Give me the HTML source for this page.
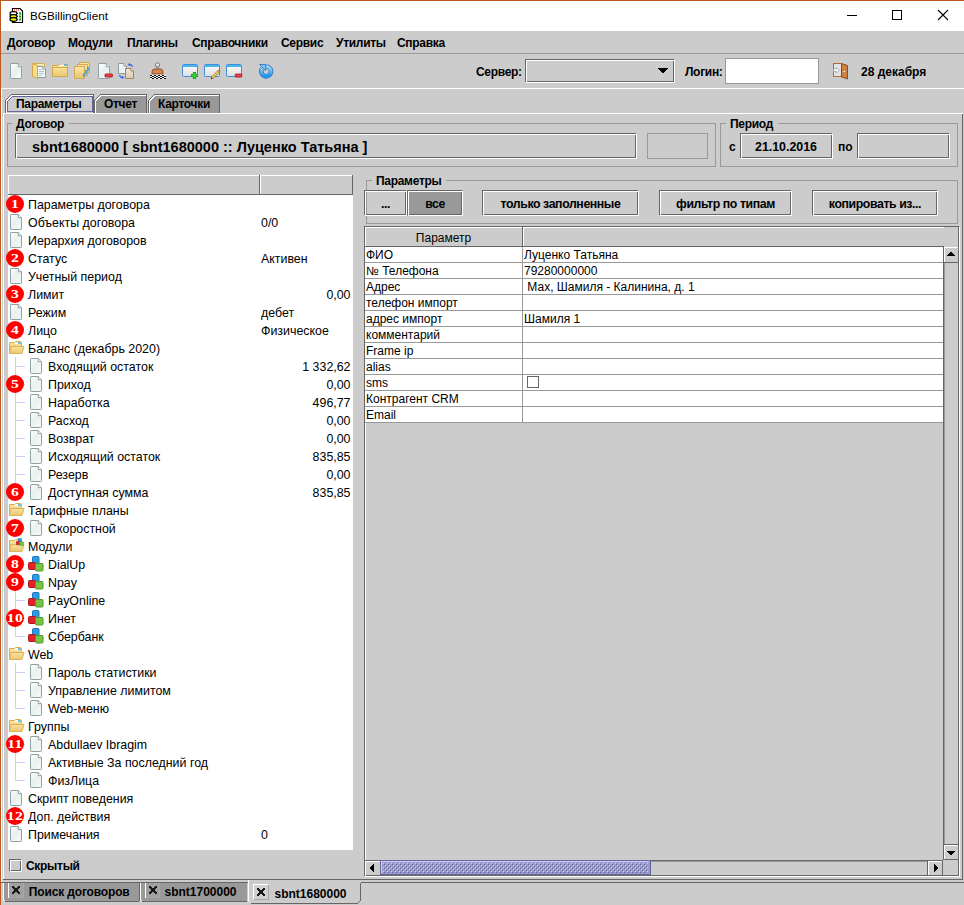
<!DOCTYPE html><html><head><meta charset="utf-8"><style>
html,body{margin:0;padding:0}
body{width:964px;height:905px;position:relative;overflow:hidden;background:#cccccc;font-family:"Liberation Sans",sans-serif}
div,span,svg{position:absolute;box-sizing:border-box}
.t{white-space:pre;display:block}
</style></head><body>
<div style="left:0px;top:0px;width:964px;height:31px;background:#fff"></div>
<div style="left:0px;top:0px;width:964px;height:1px;background:#bc581e"></div>
<div style="left:0px;top:0px;width:1px;height:905px;background:#bc581e"></div>
<span class="t" style="left:30px;top:10.10px;font-size:11.7px;line-height:11.7px;height:15.7px;font-weight:normal;color:#000;">BGBillingClient</span>
<div style="left:847px;top:15px;width:10px;height:1px;background:#000"></div>
<div style="left:892px;top:10px;width:10px;height:10px;border:1px solid #000"></div>
<svg style="left:937px;top:9px" width="12" height="12" viewBox="0 0 12 12"><path d="M1 1L11 11M11 1L1 11" stroke="#000" stroke-width="1.1"/></svg>
<div style="left:1px;top:53px;width:963px;height:1px;background:#999999"></div>
<span class="t" style="left:7px;top:36.84px;font-size:12px;line-height:12px;height:16px;font-weight:bold;color:#000;letter-spacing:-0.3px">Договор</span>
<span class="t" style="left:68px;top:36.84px;font-size:12px;line-height:12px;height:16px;font-weight:bold;color:#000;letter-spacing:-0.3px">Модули</span>
<span class="t" style="left:127px;top:36.84px;font-size:12px;line-height:12px;height:16px;font-weight:bold;color:#000;letter-spacing:-0.3px">Плагины</span>
<span class="t" style="left:192px;top:36.84px;font-size:12px;line-height:12px;height:16px;font-weight:bold;color:#000;letter-spacing:-0.3px">Справочники</span>
<span class="t" style="left:281px;top:36.84px;font-size:12px;line-height:12px;height:16px;font-weight:bold;color:#000;letter-spacing:-0.3px">Сервис</span>
<span class="t" style="left:336px;top:36.84px;font-size:12px;line-height:12px;height:16px;font-weight:bold;color:#000;letter-spacing:-0.3px">Утилиты</span>
<span class="t" style="left:397px;top:36.84px;font-size:12px;line-height:12px;height:16px;font-weight:bold;color:#000;letter-spacing:-0.3px">Справка</span>
<div style="left:1px;top:88px;width:963px;height:1px;background:#fff"></div>
<span class="t" style="left:476px;top:65.84px;font-size:12px;line-height:12px;height:16px;font-weight:bold;color:#000;letter-spacing:-0.3px">Сервер:</span>
<div style="left:525px;top:59px;width:149px;height:23px;border:1px solid #666666"></div>
<div style="left:526px;top:60px;width:149px;height:23px;border:1px solid #fff"></div>
<svg shape-rendering="crispEdges" style="left:658px;top:68px" width="10" height="5"><path d="M0 0h10v1h-10zM1 1h8v1h-8zM2 2h6v1h-6zM3 3h4v1h-4zM4 4h2v1h-2z" fill="#000"/></svg>
<span class="t" style="left:685px;top:65.84px;font-size:12px;line-height:12px;height:16px;font-weight:bold;color:#000;letter-spacing:-0.3px">Логин:</span>
<div style="left:725px;top:58px;width:94px;height:26px;background:#fff;border:1px solid #999999"></div>
<span class="t" style="left:861px;top:65.84px;font-size:12px;line-height:12px;height:16px;font-weight:bold;color:#000;">28 декабря</span>
<div style="left:3px;top:113px;width:960px;height:1px;background:#fff"></div>
<div style="left:3px;top:113px;width:1px;height:767px;background:#fff"></div>
<div style="left:3px;top:879px;width:960px;height:1px;background:#666666"></div>
<div style="left:962px;top:113px;width:1px;height:767px;background:#666666"></div>
<svg shape-rendering="crispEdges" style="left:5px;top:94px" width="89" height="20"><path d="M0.5 19V6.5L6.5 0.5H88.5V19" fill="#cccccc" stroke="#666666"/><path d="M1.5 20V7L7 1.5H88" fill="none" stroke="#fff"/><path d="M2.5 17.5V7.5L7.5 2.5H87.5V17.5H2.5Z" fill="none" stroke="#666699"/></svg>
<span class="t" style="left:16px;top:97.84px;font-size:12px;line-height:12px;height:16px;font-weight:bold;color:#000;letter-spacing:-0.3px">Параметры</span>
<svg shape-rendering="crispEdges" style="left:94px;top:94px" width="54" height="19"><path d="M0.5 19V6.5L6.5 0.5H52.5V19" fill="#999999" stroke="#666666" stroke-width="1"/><path d="M1.5 19V7L7 1.5H52" fill="none" stroke="#fff" stroke-width="1"/></svg>
<span class="t" style="left:104px;top:97.84px;font-size:12px;line-height:12px;height:16px;font-weight:bold;color:#000;letter-spacing:-0.3px">Отчет</span>
<svg shape-rendering="crispEdges" style="left:148px;top:94px" width="73" height="19"><path d="M0.5 19V6.5L6.5 0.5H71.5V19" fill="#999999" stroke="#666666" stroke-width="1"/><path d="M1.5 19V7L7 1.5H71" fill="none" stroke="#fff" stroke-width="1"/></svg>
<span class="t" style="left:158px;top:97.84px;font-size:12px;line-height:12px;height:16px;font-weight:bold;color:#000;letter-spacing:-0.3px">Карточки</span>
<div style="left:94px;top:113px;width:869px;height:1px;background:#fff"></div>
<div style="left:7px;top:123px;width:1px;height:44px;background:#999999"></div>
<div style="left:715px;top:123px;width:1px;height:44px;background:#999999"></div>
<div style="left:7px;top:166px;width:709px;height:1px;background:#999999"></div>
<div style="left:7px;top:123px;width:5px;height:1px;background:#999999"></div>
<div style="left:69px;top:123px;width:647px;height:1px;background:#999999"></div>
<span class="t" style="left:16px;top:117.84px;font-size:12px;line-height:12px;height:16px;font-weight:bold;color:#000;letter-spacing:-0.3px">Договор</span>
<div style="left:15px;top:133px;width:621px;height:25px;border:1px solid #666666"></div>
<div style="left:16px;top:134px;width:621px;height:25px;border:1px solid #fff"></div>
<span class="t" style="left:32px;top:139.73px;font-size:14.5px;line-height:14.5px;height:18.5px;font-weight:bold;color:#000;">sbnt1680000 [ sbnt1680000 :: Луценко Татьяна ]</span>
<div style="left:647px;top:133px;width:61px;height:26px;border:1px solid #999999"></div>
<div style="left:720px;top:123px;width:1px;height:44px;background:#999999"></div>
<div style="left:957px;top:123px;width:1px;height:44px;background:#999999"></div>
<div style="left:720px;top:166px;width:238px;height:1px;background:#999999"></div>
<div style="left:720px;top:123px;width:6px;height:1px;background:#999999"></div>
<div style="left:778px;top:123px;width:180px;height:1px;background:#999999"></div>
<span class="t" style="left:730px;top:117.84px;font-size:12px;line-height:12px;height:16px;font-weight:bold;color:#000;letter-spacing:-0.3px">Период</span>
<span class="t" style="left:729px;top:140.84px;font-size:12px;line-height:12px;height:16px;font-weight:bold;color:#000;">с</span>
<div style="left:740px;top:133px;width:92px;height:25px;border:1px solid #666666"></div>
<div style="left:741px;top:134px;width:92px;height:25px;border:1px solid #fff"></div>
<span class="t" style="left:636.0px;top:140.50px;width:300px;text-align:center;font-size:12.4px;line-height:12.4px;font-weight:bold;color:#000;letter-spacing:0px">21.10.2016</span>
<span class="t" style="left:838px;top:140.84px;font-size:12px;line-height:12px;height:16px;font-weight:bold;color:#000;">по</span>
<div style="left:857px;top:133px;width:92px;height:25px;border:1px solid #666666"></div>
<div style="left:858px;top:134px;width:92px;height:25px;border:1px solid #fff"></div>
<svg width="0" height="0" style="left:0;top:0"><defs>
<linearGradient id="gdoc" x1="0" y1="0" x2="1" y2="1"><stop offset="0" stop-color="#ffffff"/><stop offset="0.45" stop-color="#e8f0f0"/><stop offset="1" stop-color="#f6fbfb"/></linearGradient>
<linearGradient id="gfold" x1="0" y1="0" x2="0" y2="1"><stop offset="0" stop-color="#fbe9a6"/><stop offset="1" stop-color="#e7c270"/></linearGradient>
<linearGradient id="gfold2" x1="0" y1="0" x2="0" y2="1"><stop offset="0" stop-color="#f9e39a"/><stop offset="1" stop-color="#e9c672"/></linearGradient>
<symbol id="doc" viewBox="0 0 12 16"><path d="M1 0.5H8.3L11.5 3.7V14.8Q11.5 15.5 10.8 15.5H1.2Q0.5 15.5 0.5 14.8V1.2Q0.5 0.5 1.2 0.5Z" fill="url(#gdoc)" stroke="#8fa1a1" stroke-width="1"/><path d="M8.3 0.5V3.7H11.5" fill="#fff" stroke="#8fa1a1" stroke-width="1"/></symbol>
<symbol id="folder" viewBox="0 0 16 14"><path d="M0.5 1.5H5.5L6.5 0.5H11.5L12.5 1.5V12.5H0.5Z" fill="url(#gfold)" stroke="#d9ae55" stroke-width="1"/><path d="M6 1.5H11.5V3H6Z" fill="#fff"/><path d="M9 1.3H11.8V2.8H9Z" fill="#3aa8e8"/><path d="M2 5.5H15L13 12.5H0.5Z" fill="url(#gfold2)" stroke="#dcb25c" stroke-width="1"/></symbol>
<symbol id="mod" viewBox="0 0 16 16"><rect x="4.5" y="0.5" width="6.5" height="7" rx="1" fill="#2c9be0" stroke="#1a78c0"/><rect x="0.5" y="6.5" width="7" height="7" rx="1" fill="#e0222a" stroke="#b0151c"/><rect x="7.5" y="7.5" width="7.5" height="7.5" rx="1" fill="#76c441" stroke="#4f9a2a"/></symbol>
</defs></svg>
<div style="left:8px;top:175px;width:345px;height:675px;background:#fff"></div>
<div style="left:8px;top:175px;width:345px;height:20px;background:#cccccc"></div>
<div style="left:8px;top:175px;width:345px;height:1px;background:#fff"></div>
<div style="left:8px;top:175px;width:1px;height:20px;background:#fff"></div>
<div style="left:8px;top:194px;width:345px;height:1px;background:#666666"></div>
<div style="left:259px;top:175px;width:1px;height:20px;background:#666666"></div>
<div style="left:260px;top:176px;width:1px;height:18px;background:#fff"></div>
<div style="left:352px;top:175px;width:1px;height:20px;background:#666666"></div>
<div style="left:15px;top:357px;width:1px;height:136px;background:#ccccff"></div>
<div style="left:15px;top:366px;width:10px;height:1px;background:#ccccff"></div>
<div style="left:15px;top:384px;width:10px;height:1px;background:#ccccff"></div>
<div style="left:15px;top:402px;width:10px;height:1px;background:#ccccff"></div>
<div style="left:15px;top:420px;width:10px;height:1px;background:#ccccff"></div>
<div style="left:15px;top:438px;width:10px;height:1px;background:#ccccff"></div>
<div style="left:15px;top:456px;width:10px;height:1px;background:#ccccff"></div>
<div style="left:15px;top:474px;width:10px;height:1px;background:#ccccff"></div>
<div style="left:15px;top:492px;width:10px;height:1px;background:#ccccff"></div>
<div style="left:15px;top:519px;width:1px;height:10px;background:#ccccff"></div>
<div style="left:15px;top:528px;width:10px;height:1px;background:#ccccff"></div>
<div style="left:15px;top:555px;width:1px;height:82px;background:#ccccff"></div>
<div style="left:15px;top:564px;width:10px;height:1px;background:#ccccff"></div>
<div style="left:15px;top:582px;width:10px;height:1px;background:#ccccff"></div>
<div style="left:15px;top:600px;width:10px;height:1px;background:#ccccff"></div>
<div style="left:15px;top:618px;width:10px;height:1px;background:#ccccff"></div>
<div style="left:15px;top:636px;width:10px;height:1px;background:#ccccff"></div>
<div style="left:15px;top:663px;width:1px;height:46px;background:#ccccff"></div>
<div style="left:15px;top:672px;width:10px;height:1px;background:#ccccff"></div>
<div style="left:15px;top:690px;width:10px;height:1px;background:#ccccff"></div>
<div style="left:15px;top:708px;width:10px;height:1px;background:#ccccff"></div>
<div style="left:15px;top:735px;width:1px;height:46px;background:#ccccff"></div>
<div style="left:15px;top:744px;width:10px;height:1px;background:#ccccff"></div>
<div style="left:15px;top:762px;width:10px;height:1px;background:#ccccff"></div>
<div style="left:15px;top:780px;width:10px;height:1px;background:#ccccff"></div>
<span class="t" style="left:28px;top:198.50px;font-size:12.4px;line-height:12.4px;height:16.4px;font-weight:normal;color:#000;">Параметры договора</span>
<div style="left:6px;top:194.5px;width:18px;height:18px;border-radius:9px;background:#ff0000"></div>
<span class="t" style="left:0px;top:197.42px;width:30px;text-align:center;font-family:&quot;Liberation Serif&quot;,serif;font-weight:bold;font-size:13px;line-height:13px;color:#fff;letter-spacing:0;transform:scaleX(1.2);transform-origin:15px 50%">1</span>
<svg style="left:10px;top:214px" width="12" height="16"><use href="#doc" width="12" height="16"/></svg>
<span class="t" style="left:28px;top:216.50px;font-size:12.4px;line-height:12.4px;height:16.4px;font-weight:normal;color:#000;">Объекты договора</span>
<span class="t" style="left:261px;top:216.50px;font-size:12.4px;line-height:12.4px;height:16.4px;font-weight:normal;color:#000;">0/0</span>
<svg style="left:10px;top:232px" width="12" height="16"><use href="#doc" width="12" height="16"/></svg>
<span class="t" style="left:28px;top:234.50px;font-size:12.4px;line-height:12.4px;height:16.4px;font-weight:normal;color:#000;">Иерархия договоров</span>
<span class="t" style="left:28px;top:252.50px;font-size:12.4px;line-height:12.4px;height:16.4px;font-weight:normal;color:#000;">Статус</span>
<span class="t" style="left:261px;top:252.50px;font-size:12.4px;line-height:12.4px;height:16.4px;font-weight:normal;color:#000;">Активен</span>
<div style="left:6px;top:248.5px;width:18px;height:18px;border-radius:9px;background:#ff0000"></div>
<span class="t" style="left:0px;top:251.42px;width:30px;text-align:center;font-family:&quot;Liberation Serif&quot;,serif;font-weight:bold;font-size:13px;line-height:13px;color:#fff;letter-spacing:0;transform:scaleX(1.2);transform-origin:15px 50%">2</span>
<svg style="left:10px;top:268px" width="12" height="16"><use href="#doc" width="12" height="16"/></svg>
<span class="t" style="left:28px;top:270.50px;font-size:12.4px;line-height:12.4px;height:16.4px;font-weight:normal;color:#000;">Учетный период</span>
<span class="t" style="left:28px;top:288.50px;font-size:12.4px;line-height:12.4px;height:16.4px;font-weight:normal;color:#000;">Лимит</span>
<span class="t" style="left:150.5px;top:288.50px;width:200px;text-align:right;font-size:12.4px;line-height:12.4px;font-weight:normal;color:#000">0,00</span>
<div style="left:6px;top:284.5px;width:18px;height:18px;border-radius:9px;background:#ff0000"></div>
<span class="t" style="left:0px;top:287.42px;width:30px;text-align:center;font-family:&quot;Liberation Serif&quot;,serif;font-weight:bold;font-size:13px;line-height:13px;color:#fff;letter-spacing:0;transform:scaleX(1.2);transform-origin:15px 50%">3</span>
<svg style="left:10px;top:304px" width="12" height="16"><use href="#doc" width="12" height="16"/></svg>
<span class="t" style="left:28px;top:306.50px;font-size:12.4px;line-height:12.4px;height:16.4px;font-weight:normal;color:#000;">Режим</span>
<span class="t" style="left:261px;top:306.50px;font-size:12.4px;line-height:12.4px;height:16.4px;font-weight:normal;color:#000;">дебет</span>
<span class="t" style="left:28px;top:324.50px;font-size:12.4px;line-height:12.4px;height:16.4px;font-weight:normal;color:#000;">Лицо</span>
<span class="t" style="left:261px;top:324.50px;font-size:12.4px;line-height:12.4px;height:16.4px;font-weight:normal;color:#000;">Физическое</span>
<div style="left:6px;top:320.5px;width:18px;height:18px;border-radius:9px;background:#ff0000"></div>
<span class="t" style="left:0px;top:323.42px;width:30px;text-align:center;font-family:&quot;Liberation Serif&quot;,serif;font-weight:bold;font-size:13px;line-height:13px;color:#fff;letter-spacing:0;transform:scaleX(1.2);transform-origin:15px 50%">4</span>
<svg style="left:9px;top:341px" width="16" height="14"><use href="#folder" width="16" height="14"/></svg>
<span class="t" style="left:28px;top:342.50px;font-size:12.4px;line-height:12.4px;height:16.4px;font-weight:normal;color:#000;">Баланс (декабрь 2020)</span>
<svg style="left:30px;top:358px" width="12" height="16"><use href="#doc" width="12" height="16"/></svg>
<span class="t" style="left:48px;top:360.50px;font-size:12.4px;line-height:12.4px;height:16.4px;font-weight:normal;color:#000;">Входящий остаток</span>
<span class="t" style="left:150.5px;top:360.50px;width:200px;text-align:right;font-size:12.4px;line-height:12.4px;font-weight:normal;color:#000">1 332,62</span>
<svg style="left:30px;top:376px" width="12" height="16"><use href="#doc" width="12" height="16"/></svg>
<span class="t" style="left:48px;top:378.50px;font-size:12.4px;line-height:12.4px;height:16.4px;font-weight:normal;color:#000;">Приход</span>
<span class="t" style="left:150.5px;top:378.50px;width:200px;text-align:right;font-size:12.4px;line-height:12.4px;font-weight:normal;color:#000">0,00</span>
<div style="left:6px;top:374.5px;width:18px;height:18px;border-radius:9px;background:#ff0000"></div>
<span class="t" style="left:0px;top:377.42px;width:30px;text-align:center;font-family:&quot;Liberation Serif&quot;,serif;font-weight:bold;font-size:13px;line-height:13px;color:#fff;letter-spacing:0;transform:scaleX(1.2);transform-origin:15px 50%">5</span>
<svg style="left:30px;top:394px" width="12" height="16"><use href="#doc" width="12" height="16"/></svg>
<span class="t" style="left:48px;top:396.50px;font-size:12.4px;line-height:12.4px;height:16.4px;font-weight:normal;color:#000;">Наработка</span>
<span class="t" style="left:150.5px;top:396.50px;width:200px;text-align:right;font-size:12.4px;line-height:12.4px;font-weight:normal;color:#000">496,77</span>
<svg style="left:30px;top:412px" width="12" height="16"><use href="#doc" width="12" height="16"/></svg>
<span class="t" style="left:48px;top:414.50px;font-size:12.4px;line-height:12.4px;height:16.4px;font-weight:normal;color:#000;">Расход</span>
<span class="t" style="left:150.5px;top:414.50px;width:200px;text-align:right;font-size:12.4px;line-height:12.4px;font-weight:normal;color:#000">0,00</span>
<svg style="left:30px;top:430px" width="12" height="16"><use href="#doc" width="12" height="16"/></svg>
<span class="t" style="left:48px;top:432.50px;font-size:12.4px;line-height:12.4px;height:16.4px;font-weight:normal;color:#000;">Возврат</span>
<span class="t" style="left:150.5px;top:432.50px;width:200px;text-align:right;font-size:12.4px;line-height:12.4px;font-weight:normal;color:#000">0,00</span>
<svg style="left:30px;top:448px" width="12" height="16"><use href="#doc" width="12" height="16"/></svg>
<span class="t" style="left:48px;top:450.50px;font-size:12.4px;line-height:12.4px;height:16.4px;font-weight:normal;color:#000;">Исходящий остаток</span>
<span class="t" style="left:150.5px;top:450.50px;width:200px;text-align:right;font-size:12.4px;line-height:12.4px;font-weight:normal;color:#000">835,85</span>
<svg style="left:30px;top:466px" width="12" height="16"><use href="#doc" width="12" height="16"/></svg>
<span class="t" style="left:48px;top:468.50px;font-size:12.4px;line-height:12.4px;height:16.4px;font-weight:normal;color:#000;">Резерв</span>
<span class="t" style="left:150.5px;top:468.50px;width:200px;text-align:right;font-size:12.4px;line-height:12.4px;font-weight:normal;color:#000">0,00</span>
<svg style="left:30px;top:484px" width="12" height="16"><use href="#doc" width="12" height="16"/></svg>
<span class="t" style="left:48px;top:486.50px;font-size:12.4px;line-height:12.4px;height:16.4px;font-weight:normal;color:#000;">Доступная сумма</span>
<span class="t" style="left:150.5px;top:486.50px;width:200px;text-align:right;font-size:12.4px;line-height:12.4px;font-weight:normal;color:#000">835,85</span>
<div style="left:6px;top:482.5px;width:18px;height:18px;border-radius:9px;background:#ff0000"></div>
<span class="t" style="left:0px;top:485.42px;width:30px;text-align:center;font-family:&quot;Liberation Serif&quot;,serif;font-weight:bold;font-size:13px;line-height:13px;color:#fff;letter-spacing:0;transform:scaleX(1.2);transform-origin:15px 50%">6</span>
<svg style="left:9px;top:503px" width="16" height="14"><use href="#folder" width="16" height="14"/></svg>
<span class="t" style="left:28px;top:504.50px;font-size:12.4px;line-height:12.4px;height:16.4px;font-weight:normal;color:#000;">Тарифные планы</span>
<svg style="left:30px;top:520px" width="12" height="16"><use href="#doc" width="12" height="16"/></svg>
<span class="t" style="left:48px;top:522.50px;font-size:12.4px;line-height:12.4px;height:16.4px;font-weight:normal;color:#000;">Скоростной</span>
<div style="left:6px;top:518.5px;width:18px;height:18px;border-radius:9px;background:#ff0000"></div>
<span class="t" style="left:0px;top:521.42px;width:30px;text-align:center;font-family:&quot;Liberation Serif&quot;,serif;font-weight:bold;font-size:13px;line-height:13px;color:#fff;letter-spacing:0;transform:scaleX(1.2);transform-origin:15px 50%">7</span>
<svg style="left:9px;top:539px" width="16" height="14"><use href="#folder" width="16" height="14"/></svg>
<svg style="left:16px;top:538px" width="8" height="8"><use href="#mod" width="8" height="8"/></svg>
<span class="t" style="left:28px;top:540.50px;font-size:12.4px;line-height:12.4px;height:16.4px;font-weight:normal;color:#000;">Модули</span>
<svg style="left:28px;top:556px" width="16" height="16"><use href="#mod" width="16" height="16"/></svg>
<span class="t" style="left:48px;top:558.50px;font-size:12.4px;line-height:12.4px;height:16.4px;font-weight:normal;color:#000;">DialUp</span>
<div style="left:6px;top:554.5px;width:18px;height:18px;border-radius:9px;background:#ff0000"></div>
<span class="t" style="left:0px;top:557.42px;width:30px;text-align:center;font-family:&quot;Liberation Serif&quot;,serif;font-weight:bold;font-size:13px;line-height:13px;color:#fff;letter-spacing:0;transform:scaleX(1.2);transform-origin:15px 50%">8</span>
<svg style="left:28px;top:574px" width="16" height="16"><use href="#mod" width="16" height="16"/></svg>
<span class="t" style="left:48px;top:576.50px;font-size:12.4px;line-height:12.4px;height:16.4px;font-weight:normal;color:#000;">Npay</span>
<div style="left:6px;top:572.5px;width:18px;height:18px;border-radius:9px;background:#ff0000"></div>
<span class="t" style="left:0px;top:575.42px;width:30px;text-align:center;font-family:&quot;Liberation Serif&quot;,serif;font-weight:bold;font-size:13px;line-height:13px;color:#fff;letter-spacing:0;transform:scaleX(1.2);transform-origin:15px 50%">9</span>
<svg style="left:28px;top:592px" width="16" height="16"><use href="#mod" width="16" height="16"/></svg>
<span class="t" style="left:48px;top:594.50px;font-size:12.4px;line-height:12.4px;height:16.4px;font-weight:normal;color:#000;">PayOnline</span>
<svg style="left:28px;top:610px" width="16" height="16"><use href="#mod" width="16" height="16"/></svg>
<span class="t" style="left:48px;top:612.50px;font-size:12.4px;line-height:12.4px;height:16.4px;font-weight:normal;color:#000;">Инет</span>
<div style="left:6px;top:608.5px;width:18px;height:18px;border-radius:9px;background:#ff0000"></div>
<span class="t" style="left:0px;top:611.42px;width:30px;text-align:center;font-family:&quot;Liberation Serif&quot;,serif;font-weight:bold;font-size:13px;line-height:13px;color:#fff;letter-spacing:0.4px;transform:scaleX(1.2);transform-origin:15px 50%">10</span>
<svg style="left:28px;top:628px" width="16" height="16"><use href="#mod" width="16" height="16"/></svg>
<span class="t" style="left:48px;top:630.50px;font-size:12.4px;line-height:12.4px;height:16.4px;font-weight:normal;color:#000;">Сбербанк</span>
<svg style="left:9px;top:647px" width="16" height="14"><use href="#folder" width="16" height="14"/></svg>
<span class="t" style="left:28px;top:648.50px;font-size:12.4px;line-height:12.4px;height:16.4px;font-weight:normal;color:#000;">Web</span>
<svg style="left:30px;top:664px" width="12" height="16"><use href="#doc" width="12" height="16"/></svg>
<span class="t" style="left:48px;top:666.50px;font-size:12.4px;line-height:12.4px;height:16.4px;font-weight:normal;color:#000;">Пароль статистики</span>
<svg style="left:30px;top:682px" width="12" height="16"><use href="#doc" width="12" height="16"/></svg>
<span class="t" style="left:48px;top:684.50px;font-size:12.4px;line-height:12.4px;height:16.4px;font-weight:normal;color:#000;">Управление лимитом</span>
<svg style="left:30px;top:700px" width="12" height="16"><use href="#doc" width="12" height="16"/></svg>
<span class="t" style="left:48px;top:702.50px;font-size:12.4px;line-height:12.4px;height:16.4px;font-weight:normal;color:#000;">Web-меню</span>
<svg style="left:9px;top:719px" width="16" height="14"><use href="#folder" width="16" height="14"/></svg>
<span class="t" style="left:28px;top:720.50px;font-size:12.4px;line-height:12.4px;height:16.4px;font-weight:normal;color:#000;">Группы</span>
<svg style="left:30px;top:736px" width="12" height="16"><use href="#doc" width="12" height="16"/></svg>
<span class="t" style="left:48px;top:738.50px;font-size:12.4px;line-height:12.4px;height:16.4px;font-weight:normal;color:#000;">Abdullaev Ibragim</span>
<div style="left:6px;top:734.5px;width:18px;height:18px;border-radius:9px;background:#ff0000"></div>
<span class="t" style="left:0px;top:737.42px;width:30px;text-align:center;font-family:&quot;Liberation Serif&quot;,serif;font-weight:bold;font-size:13px;line-height:13px;color:#fff;letter-spacing:0.4px;transform:scaleX(1.2);transform-origin:15px 50%">11</span>
<svg style="left:30px;top:754px" width="12" height="16"><use href="#doc" width="12" height="16"/></svg>
<span class="t" style="left:48px;top:756.50px;font-size:12.4px;line-height:12.4px;height:16.4px;font-weight:normal;color:#000;">Активные За последний год</span>
<svg style="left:30px;top:772px" width="12" height="16"><use href="#doc" width="12" height="16"/></svg>
<span class="t" style="left:48px;top:774.50px;font-size:12.4px;line-height:12.4px;height:16.4px;font-weight:normal;color:#000;">ФизЛица</span>
<svg style="left:10px;top:790px" width="12" height="16"><use href="#doc" width="12" height="16"/></svg>
<span class="t" style="left:28px;top:792.50px;font-size:12.4px;line-height:12.4px;height:16.4px;font-weight:normal;color:#000;">Скрипт поведения</span>
<span class="t" style="left:28px;top:810.50px;font-size:12.4px;line-height:12.4px;height:16.4px;font-weight:normal;color:#000;">Доп. действия</span>
<div style="left:6px;top:806.5px;width:18px;height:18px;border-radius:9px;background:#ff0000"></div>
<span class="t" style="left:0px;top:809.42px;width:30px;text-align:center;font-family:&quot;Liberation Serif&quot;,serif;font-weight:bold;font-size:13px;line-height:13px;color:#fff;letter-spacing:0.4px;transform:scaleX(1.2);transform-origin:15px 50%">12</span>
<svg style="left:10px;top:826px" width="12" height="16"><use href="#doc" width="12" height="16"/></svg>
<span class="t" style="left:28px;top:828.50px;font-size:12.4px;line-height:12.4px;height:16.4px;font-weight:normal;color:#000;">Примечания</span>
<span class="t" style="left:261px;top:828.50px;font-size:12.4px;line-height:12.4px;height:16.4px;font-weight:normal;color:#000;">0</span>
<div style="left:9px;top:859px;width:12px;height:12px;border:1px solid #666666"></div>
<div style="left:10px;top:860px;width:12px;height:12px;border:1px solid #fff"></div>
<span class="t" style="left:26px;top:859.84px;font-size:12px;line-height:12px;height:16px;font-weight:bold;color:#000;letter-spacing:-0.3px">Скрытый</span>
<div style="left:366px;top:180px;width:1px;height:44px;background:#999999"></div>
<div style="left:957px;top:180px;width:1px;height:44px;background:#999999"></div>
<div style="left:366px;top:223px;width:592px;height:1px;background:#999999"></div>
<div style="left:366px;top:180px;width:6px;height:1px;background:#999999"></div>
<div style="left:446px;top:180px;width:512px;height:1px;background:#999999"></div>
<span class="t" style="left:376px;top:174.84px;font-size:12px;line-height:12px;height:16px;font-weight:bold;color:#000;letter-spacing:-0.3px">Параметры</span>
<div style="left:364px;top:190px;width:42px;height:25px;border:1px solid #666666"></div>
<div style="left:365px;top:191px;width:42px;height:25px;border:1px solid #fff"></div>
<span class="t" style="left:354.0px;top:197.89px;width:63px;text-align:center;font-size:12.3px;line-height:12.3px;font-weight:bold;color:#000;letter-spacing:-0.4px">...</span>
<div style="left:407px;top:190px;width:56px;height:26px;background:#999999"></div>
<div style="left:407px;top:190px;width:55px;height:25px;border:1px solid #666666"></div>
<div style="left:408px;top:191px;width:55px;height:25px;border:1px solid #fff"></div>
<span class="t" style="left:397.0px;top:197.89px;width:76px;text-align:center;font-size:12.3px;line-height:12.3px;font-weight:bold;color:#000;letter-spacing:-0.4px">все</span>
<div style="left:482px;top:190px;width:156px;height:25px;border:1px solid #666666"></div>
<div style="left:483px;top:191px;width:156px;height:25px;border:1px solid #fff"></div>
<span class="t" style="left:472.0px;top:197.89px;width:177px;text-align:center;font-size:12.3px;line-height:12.3px;font-weight:bold;color:#000;letter-spacing:-0.4px">только заполненные</span>
<div style="left:659px;top:190px;width:132px;height:25px;border:1px solid #666666"></div>
<div style="left:660px;top:191px;width:132px;height:25px;border:1px solid #fff"></div>
<span class="t" style="left:649.0px;top:197.89px;width:153px;text-align:center;font-size:12.3px;line-height:12.3px;font-weight:bold;color:#000;letter-spacing:-0.4px">фильтр по типам</span>
<div style="left:812px;top:190px;width:125px;height:25px;border:1px solid #666666"></div>
<div style="left:813px;top:191px;width:125px;height:25px;border:1px solid #fff"></div>
<span class="t" style="left:802.0px;top:197.89px;width:146px;text-align:center;font-size:12.3px;line-height:12.3px;font-weight:bold;color:#000;letter-spacing:-0.4px">копировать из...</span>
<div style="left:364px;top:226px;width:595px;height:650px;border:1px solid #666666"></div>
<div style="left:365px;top:227px;width:595px;height:650px;border:1px solid #fff"></div>
<div style="left:365px;top:227px;width:593px;height:20px;background:#cccccc"></div>
<div style="left:365px;top:227px;width:579px;height:1px;background:#fff"></div>
<div style="left:365px;top:227px;width:1px;height:19px;background:#fff"></div>
<div style="left:365px;top:246px;width:579px;height:1px;background:#666666"></div>
<div style="left:522px;top:227px;width:1px;height:20px;background:#666666"></div>
<div style="left:523px;top:228px;width:1px;height:18px;background:#fff"></div>
<span class="t" style="left:368.5px;top:231.84px;width:150px;text-align:center;font-size:12px;line-height:12px;font-weight:normal;color:#000;letter-spacing:0px">Параметр</span>
<div style="left:365px;top:247px;width:578px;height:175px;background:#fff"></div>
<div style="left:365px;top:262px;width:578px;height:1px;background:#999999"></div>
<div style="left:365px;top:278px;width:578px;height:1px;background:#999999"></div>
<div style="left:365px;top:294px;width:578px;height:1px;background:#999999"></div>
<div style="left:365px;top:310px;width:578px;height:1px;background:#999999"></div>
<div style="left:365px;top:326px;width:578px;height:1px;background:#999999"></div>
<div style="left:365px;top:342px;width:578px;height:1px;background:#999999"></div>
<div style="left:365px;top:358px;width:578px;height:1px;background:#999999"></div>
<div style="left:365px;top:374px;width:578px;height:1px;background:#999999"></div>
<div style="left:365px;top:390px;width:578px;height:1px;background:#999999"></div>
<div style="left:365px;top:406px;width:578px;height:1px;background:#999999"></div>
<div style="left:365px;top:422px;width:578px;height:1px;background:#999999"></div>
<div style="left:522px;top:247px;width:1px;height:176px;background:#999999"></div>
<span class="t" style="left:366px;top:249.34px;font-size:12px;line-height:12px;height:16px;font-weight:normal;color:#000;">ФИО</span>
<span class="t" style="left:524px;top:249.34px;font-size:12px;line-height:12px;height:16px;font-weight:normal;color:#000;">Луценко Татьяна</span>
<span class="t" style="left:366px;top:265.34px;font-size:12px;line-height:12px;height:16px;font-weight:normal;color:#000;">№ Телефона</span>
<span class="t" style="left:524px;top:265.34px;font-size:12px;line-height:12px;height:16px;font-weight:normal;color:#000;">79280000000</span>
<span class="t" style="left:366px;top:281.34px;font-size:12px;line-height:12px;height:16px;font-weight:normal;color:#000;">Адрес</span>
<span class="t" style="left:524px;top:281.34px;font-size:12px;line-height:12px;height:16px;font-weight:normal;color:#000;"> Мах, Шамиля - Калинина, д. 1</span>
<span class="t" style="left:366px;top:297.34px;font-size:12px;line-height:12px;height:16px;font-weight:normal;color:#000;">телефон импорт</span>
<span class="t" style="left:366px;top:313.34px;font-size:12px;line-height:12px;height:16px;font-weight:normal;color:#000;">адрес импорт</span>
<span class="t" style="left:524px;top:313.34px;font-size:12px;line-height:12px;height:16px;font-weight:normal;color:#000;">Шамиля 1</span>
<span class="t" style="left:366px;top:329.34px;font-size:12px;line-height:12px;height:16px;font-weight:normal;color:#000;">комментарий</span>
<span class="t" style="left:366px;top:345.34px;font-size:12px;line-height:12px;height:16px;font-weight:normal;color:#000;">Frame ip</span>
<span class="t" style="left:366px;top:361.34px;font-size:12px;line-height:12px;height:16px;font-weight:normal;color:#000;">alias</span>
<span class="t" style="left:366px;top:377.34px;font-size:12px;line-height:12px;height:16px;font-weight:normal;color:#000;">sms</span>
<span class="t" style="left:366px;top:393.34px;font-size:12px;line-height:12px;height:16px;font-weight:normal;color:#000;">Контрагент CRM</span>
<span class="t" style="left:366px;top:409.34px;font-size:12px;line-height:12px;height:16px;font-weight:normal;color:#000;">Email</span>
<div style="left:527px;top:376px;width:12px;height:12px;border:1px solid #666666"></div>
<div style="left:943px;top:247px;width:15px;height:613px;background:#cccccc"></div>
<div style="left:943px;top:247px;width:1px;height:613px;background:#666666"></div>
<div style="left:944px;top:263px;width:1px;height:582px;background:#999999"></div>
<div style="left:944px;top:247px;width:14px;height:16px;background:#cccccc"></div>
<div style="left:944px;top:247px;width:14px;height:1px;background:#fff"></div>
<div style="left:944px;top:247px;width:1px;height:15px;background:#fff"></div>
<div style="left:944px;top:262px;width:14px;height:1px;background:#666666"></div>
<svg shape-rendering="crispEdges" style="left:947px;top:252px" width="8" height="4"><path d="M3 0h2v1h-2zM2 1h4v1h-4zM1 2h6v1h-6zM0 3h8v1h-8z" fill="#000"/></svg>
<div style="left:944px;top:844px;width:14px;height:1px;background:#666666"></div>
<div style="left:944px;top:845px;width:14px;height:1px;background:#fff"></div>
<div style="left:944px;top:845px;width:1px;height:14px;background:#fff"></div>
<div style="left:944px;top:859px;width:14px;height:1px;background:#666666"></div>
<svg shape-rendering="crispEdges" style="left:947px;top:851px" width="8" height="4"><path d="M0 0h8v1h-8zM1 1h6v1h-6zM2 2h4v1h-4zM3 3h2v1h-2z" fill="#000"/></svg>
<div style="left:958px;top:227px;width:1px;height:649px;background:#666666"></div>
<div style="left:365px;top:860px;width:578px;height:15px;background:#cccccc"></div>
<div style="left:365px;top:860px;width:578px;height:1px;background:#666666"></div>
<div style="left:651px;top:861px;width:277px;height:1px;background:#999999"></div>
<div style="left:365px;top:861px;width:16px;height:1px;background:#fff"></div>
<div style="left:365px;top:861px;width:1px;height:14px;background:#fff"></div>
<div style="left:380px;top:861px;width:1px;height:14px;background:#666666"></div>
<svg shape-rendering="crispEdges" style="left:370px;top:864px" width="4" height="8"><path d="M0 3h1v2h-1zM1 2h1v4h-1zM2 1h1v6h-1zM3 0h1v8h-1z" fill="#000"/></svg>
<div style="left:927px;top:861px;width:1px;height:14px;background:#666666"></div>
<div style="left:928px;top:861px;width:15px;height:1px;background:#fff"></div>
<div style="left:928px;top:861px;width:1px;height:14px;background:#fff"></div>
<div style="left:942px;top:860px;width:1px;height:16px;background:#666666"></div>
<svg shape-rendering="crispEdges" style="left:934px;top:864px" width="4" height="8"><path d="M0 0h1v8h-1zM1 1h1v6h-1zM2 2h1v4h-1zM3 3h1v2h-1z" fill="#000"/></svg>
<svg shape-rendering="crispEdges" style="left:380px;top:860px" width="271" height="15"><defs><pattern id="bump" x="3" y="3" width="4" height="4" patternUnits="userSpaceOnUse"><rect x="0" y="0" width="1" height="1" fill="#ccccff"/><rect x="2" y="2" width="1" height="1" fill="#ccccff"/><rect x="1" y="1" width="1" height="1" fill="#666699"/><rect x="3" y="3" width="1" height="1" fill="#666699"/></pattern></defs>
<rect x="0" y="0" width="271" height="15" fill="#9999cc"/><rect x="0.5" y="0.5" width="270" height="14" fill="none" stroke="#666699"/><path d="M1.5 13V1.5H269" fill="none" stroke="#ccccff"/><rect x="3" y="3" width="265" height="10" fill="url(#bump)"/></svg>
<div style="left:943px;top:859px;width:15px;height:1px;background:#666666"></div>
<div style="left:1px;top:88px;width:1px;height:794px;background:#fff"></div>
<div style="left:1px;top:882px;width:247px;height:1px;background:#666666"></div>
<div style="left:361px;top:882px;width:603px;height:1px;background:#666666"></div>
<svg shape-rendering="crispEdges" style="left:3px;top:883px" width="137" height="19"><path d="M0 0H136V18H2L0 16Z" fill="#999999"/><path d="M0.5 0V16.5L2.5 18.5" fill="none" stroke="#fff"/><path d="M2 18.5H136" stroke="#666666"/><path d="M136.5 0V18" stroke="#666666"/></svg>
<div style="left:9px;top:883px;width:15px;height:15px;background:#a0a0a0"></div>
<div style="left:8px;top:883px;width:1px;height:15px;background:#fff"></div>
<div style="left:9px;top:897px;width:15px;height:1px;background:#a8a8a0"></div>
<div style="left:23px;top:883px;width:1px;height:15px;background:#a8a8a0"></div>
<svg shape-rendering="crispEdges" style="left:12px;top:886px" width="8" height="8"><path d="M0 0h1v1h-1zM1 0h1v1h-1zM6 0h1v1h-1zM7 0h1v1h-1zM0 1h1v1h-1zM1 1h1v1h-1zM2 1h1v1h-1zM5 1h1v1h-1zM6 1h1v1h-1zM7 1h1v1h-1zM1 2h1v1h-1zM2 2h1v1h-1zM3 2h1v1h-1zM4 2h1v1h-1zM5 2h1v1h-1zM6 2h1v1h-1zM2 3h1v1h-1zM3 3h1v1h-1zM4 3h1v1h-1zM5 3h1v1h-1zM2 4h1v1h-1zM3 4h1v1h-1zM4 4h1v1h-1zM5 4h1v1h-1zM1 5h1v1h-1zM2 5h1v1h-1zM3 5h1v1h-1zM4 5h1v1h-1zM5 5h1v1h-1zM6 5h1v1h-1zM0 6h1v1h-1zM1 6h1v1h-1zM2 6h1v1h-1zM5 6h1v1h-1zM6 6h1v1h-1zM7 6h1v1h-1zM0 7h1v1h-1zM1 7h1v1h-1zM6 7h1v1h-1zM7 7h1v1h-1z" fill="#1a1a1a"/></svg>
<span class="t" style="left:28.8px;top:886.14px;font-size:12px;line-height:12px;height:16px;font-weight:bold;color:#000;letter-spacing:-0.15px">Поиск договоров</span>
<svg shape-rendering="crispEdges" style="left:140px;top:883px" width="108" height="19"><path d="M0 0H107V18H2L0 16Z" fill="#999999"/><path d="M0.5 0V16.5L2.5 18.5" fill="none" stroke="#fff"/><path d="M2 18.5H107" stroke="#666666"/></svg>
<div style="left:145px;top:883px;width:15px;height:15px;background:#a0a0a0"></div>
<div style="left:145px;top:883px;width:1px;height:15px;background:#fff"></div>
<div style="left:146px;top:897px;width:14px;height:1px;background:#a8a8a0"></div>
<div style="left:159px;top:883px;width:1px;height:15px;background:#a8a8a0"></div>
<svg shape-rendering="crispEdges" style="left:149px;top:886px" width="8" height="8"><path d="M0 0h1v1h-1zM1 0h1v1h-1zM6 0h1v1h-1zM7 0h1v1h-1zM0 1h1v1h-1zM1 1h1v1h-1zM2 1h1v1h-1zM5 1h1v1h-1zM6 1h1v1h-1zM7 1h1v1h-1zM1 2h1v1h-1zM2 2h1v1h-1zM3 2h1v1h-1zM4 2h1v1h-1zM5 2h1v1h-1zM6 2h1v1h-1zM2 3h1v1h-1zM3 3h1v1h-1zM4 3h1v1h-1zM5 3h1v1h-1zM2 4h1v1h-1zM3 4h1v1h-1zM4 4h1v1h-1zM5 4h1v1h-1zM1 5h1v1h-1zM2 5h1v1h-1zM3 5h1v1h-1zM4 5h1v1h-1zM5 5h1v1h-1zM6 5h1v1h-1zM0 6h1v1h-1zM1 6h1v1h-1zM2 6h1v1h-1zM5 6h1v1h-1zM6 6h1v1h-1zM7 6h1v1h-1zM0 7h1v1h-1zM1 7h1v1h-1zM6 7h1v1h-1zM7 7h1v1h-1z" fill="#1a1a1a"/></svg>
<span class="t" style="left:164.5px;top:886.24px;font-size:12px;line-height:12px;height:16px;font-weight:bold;color:#000;">sbnt1700000</span>
<svg shape-rendering="crispEdges" style="left:248px;top:880px" width="114" height="24"><path d="M0 0H112V21L110 23H3L0 20Z" fill="#cccccc"/><path d="M0.5 0V20.5L2.5 22.5" fill="none" stroke="#fff"/><path d="M2.5 23.5H109.5L112.5 20.5V3" fill="none" stroke="#666666"/></svg>
<div style="left:253px;top:884px;width:16px;height:16px;background:#d0d0d0;border-top:1px solid #fff;border-left:1px solid #fff;border-right:1px solid #a8a8a0;border-bottom:1px solid #a8a8a0"></div>
<svg shape-rendering="crispEdges" style="left:257px;top:888px" width="8" height="8"><path d="M0 0h1v1h-1zM1 0h1v1h-1zM6 0h1v1h-1zM7 0h1v1h-1zM0 1h1v1h-1zM1 1h1v1h-1zM2 1h1v1h-1zM5 1h1v1h-1zM6 1h1v1h-1zM7 1h1v1h-1zM1 2h1v1h-1zM2 2h1v1h-1zM3 2h1v1h-1zM4 2h1v1h-1zM5 2h1v1h-1zM6 2h1v1h-1zM2 3h1v1h-1zM3 3h1v1h-1zM4 3h1v1h-1zM5 3h1v1h-1zM2 4h1v1h-1zM3 4h1v1h-1zM4 4h1v1h-1zM5 4h1v1h-1zM1 5h1v1h-1zM2 5h1v1h-1zM3 5h1v1h-1zM4 5h1v1h-1zM5 5h1v1h-1zM6 5h1v1h-1zM0 6h1v1h-1zM1 6h1v1h-1zM2 6h1v1h-1zM5 6h1v1h-1zM6 6h1v1h-1zM7 6h1v1h-1zM0 7h1v1h-1zM1 7h1v1h-1zM6 7h1v1h-1zM7 7h1v1h-1z" fill="#1a1a1a"/></svg>
<span class="t" style="left:274.5px;top:888.24px;font-size:12px;line-height:12px;height:16px;font-weight:bold;color:#000;">sbnt1680000</span>
<svg width="0" height="0" style="left:0;top:0"><defs>
<linearGradient id="gwin" x1="0" y1="0" x2="0" y2="1"><stop offset="0" stop-color="#ffffff"/><stop offset="1" stop-color="#dcdcdc"/></linearGradient>
<linearGradient id="gbeige" x1="0" y1="0" x2="0" y2="1"><stop offset="0" stop-color="#efe6d6"/><stop offset="1" stop-color="#dccbb0"/></linearGradient>
<symbol id="win" viewBox="0 0 16 13"><rect x="0.5" y="0.5" width="15" height="12" rx="1" fill="url(#gwin)" stroke="#3f8fd8"/><rect x="1" y="1" width="14" height="2" fill="#45b4ef"/></symbol>
</defs></svg>
<svg style="left:10px;top:63px" width="12" height="16"><use href="#doc" width="12" height="16"/></svg>
<svg style="left:31px;top:62px" width="17" height="18" viewBox="0 0 17 18"><path d="M1.5 1.5H13Q13.5 1.5 13.5 2V12.5H1.5Z" fill="url(#gfold)" stroke="#d9ae55"/><path d="M2 2.6H12.8" stroke="#fbeaa8"/><path d="M6.5 4.5H12L14.5 7V15.5H6.5Z" fill="url(#gdoc)" stroke="#8a9c9c"/><path d="M12 4.5V7H14.5" fill="#fff" stroke="#8a9c9c"/><path d="M8 7.5H11M8 9.5H13M8 11.5H13M8 13.5H10.5" stroke="#b8c6c6"/><path d="M1.5 1.5L6.5 3.5V16.5L1.5 14.5Z" fill="#f5dc8e" stroke="#d3a448"/></svg>
<svg style="left:52px;top:63px" width="17" height="15" viewBox="0 0 17 15"><path d="M0.5 2.5H6L7 1.5H15.5V13.5H0.5Z" fill="url(#gfold)" stroke="#d4a84f"/><path d="M8 1.5H14V3H8Z" fill="#fff"/><path d="M12 1.2H14.5V2.8H12Z" fill="#3aa8e8"/><path d="M0.5 4.5H15.5V13.5H0.5Z" fill="url(#gfold2)" stroke="#d4a84f"/></svg>
<svg style="left:74px;top:62px" width="17" height="18" viewBox="0 0 17 18"><path d="M5.5 0.5H15.5V10.5H5.5Z" fill="url(#gfold)" stroke="#d4a84f"/><path d="M3.5 2.5H13.5V13.5H3.5Z" fill="url(#gfold)" stroke="#d4a84f"/><path d="M0.5 4.5H10.5V16.5H0.5Z" fill="url(#gfold)" stroke="#d4a84f"/><path d="M14 5V9M12 8V12M10 11V15" stroke="#2aa0e8" stroke-width="1.5"/></svg>
<svg style="left:98px;top:63px" width="12" height="16"><use href="#doc" width="12" height="16"/></svg>
<svg style="left:104px;top:73px" width="10" height="5"><rect x="1" y="1" width="7.4" height="3" rx="0.6" fill="#e8404a" stroke="#b01820" stroke-width="0.9"/></svg>
<svg style="left:117px;top:62px" width="18" height="18" viewBox="0 0 18 18"><path d="M1.5 1.5H7L9.5 4V11.5H1.5Z" fill="url(#gdoc)" stroke="#8a9c9c"/><path d="M7 1.5V4H9.5" fill="#fff" stroke="#8a9c9c"/><path d="M8.5 6.5H14L16.5 9V16.5H8.5Z" fill="url(#gbeige)" stroke="#9a8468"/><path d="M14 6.5V9H16.5" fill="#fff" stroke="#9a8468"/><path d="M10.6 2.5L13 0.7V4.3Z" fill="#3a68e8"/><path d="M12.5 2.5Q14.8 2.5 15.6 4.8" fill="none" stroke="#3a68e8" stroke-width="1.3"/><path d="M7.4 15.5L5 13.7V17.3Z" fill="#3a68e8"/><path d="M5.5 15.5Q3.2 15.5 2.4 13.2" fill="none" stroke="#3a68e8" stroke-width="1.3"/></svg>
<svg style="left:149px;top:62px" width="18" height="18" viewBox="0 0 18 18"><circle cx="8.5" cy="3" r="2.2" fill="#e8e8e8" stroke="#707070" stroke-width="0.9"/><path d="M7.6 4.5H9.4L9 8H8Z" fill="#d0d0d0" stroke="#666" stroke-width="0.6"/><path d="M3 11.8V9.8Q3 7.3 5.5 7H11.5Q14 7.3 14 9.8V11.8Z" fill="#d8874c" stroke="#8d4420" stroke-width="0.9"/><path shape-rendering="crispEdges" d="M1 13h2v1h-2zM5 13h2v1h-2zM9 13h2v1h-2zM13 13h2v1h-2zM3 14h2v1h-2zM7 14h2v1h-2zM11 14h2v1h-2zM15 14h2v1h-2zM1 15h2v1h-2zM5 15h2v1h-2zM9 15h2v1h-2zM13 15h2v1h-2zM3 16h2v1h-2zM7 16h2v1h-2zM11 16h2v1h-2zM15 16h2v1h-2z" fill="#111"/><path shape-rendering="crispEdges" d="M3 13h2v1h-2zM7 13h2v1h-2zM11 13h2v1h-2zM15 13h2v1h-2zM1 14h2v1h-2zM5 14h2v1h-2zM9 14h2v1h-2zM13 14h2v1h-2zM3 15h2v1h-2zM7 15h2v1h-2zM11 15h2v1h-2zM15 15h2v1h-2zM1 16h2v1h-2zM5 16h2v1h-2zM9 16h2v1h-2zM13 16h2v1h-2z" fill="#f4f4f4"/></svg>
<svg style="left:182px;top:64px" width="16" height="13"><use href="#win" width="16" height="13"/></svg>
<svg style="left:190px;top:71px" width="9" height="9" viewBox="0 0 9 9"><path d="M4.5 1V8M1 4.5H8" stroke="#1a9a1a" stroke-width="3.2"/><path d="M4.5 1.5V7.5M1.5 4.5H7.5" stroke="#3ad23a" stroke-width="1.6"/></svg>
<svg style="left:204px;top:64px" width="16" height="13"><use href="#win" width="16" height="13"/></svg>
<svg style="left:210px;top:69px" width="11" height="11" viewBox="0 0 11 11"><path d="M1 10L2 7.5L8 1.5L9.5 3L3.5 9Z" fill="#f1d64a" stroke="#8a6f1a" stroke-width="0.8"/><path d="M8 1.5L9.5 3L10.3 2.2L8.8 0.7Z" fill="#e84a4a"/><path d="M1 10L1.6 8.5L2.5 9.4Z" fill="#111"/></svg>
<svg style="left:226px;top:64px" width="16" height="13"><use href="#win" width="16" height="13"/></svg>
<svg style="left:234px;top:73px" width="9" height="5"><rect x="1.3" y="1.1" width="6.5" height="3" rx="0.6" fill="#e8404a" stroke="#b01820" stroke-width="0.9"/></svg>
<svg style="left:258px;top:63px" width="16" height="16" viewBox="0 0 16 16"><defs><linearGradient id="gref" x1="0" y1="0" x2="0" y2="1"><stop offset="0" stop-color="#a8d8f4"/><stop offset="1" stop-color="#1a9af0"/></linearGradient></defs><path d="M8.3 3.5A4.9 4.9 0 1 1 4.1 5.6" fill="none" stroke="#2a78c8" stroke-width="4.6"/><path d="M8.3 3.5A4.9 4.9 0 1 1 4.1 5.6" fill="none" stroke="url(#gref)" stroke-width="3"/><path d="M1.5 1.5H7.6V7.6Z" fill="#7cc8f4" stroke="#2a7cc8" stroke-width="0.9"/></svg>
<svg style="left:9px;top:7px" width="17" height="17" viewBox="0 0 17 17"><path d="M3.5 1.5H11L13.5 4V15.5H3.5Z" fill="#fff" stroke="#000" stroke-width="1.2"/><path d="M5 3H11" stroke="#f00" stroke-dasharray="1 1"/><path d="M8 6V14" stroke="#000" stroke-dasharray="1 2"/><path d="M11 5.5V14" stroke="#0a0" stroke-width="2" stroke-dasharray="2 1"/><ellipse cx="4.5" cy="6.5" rx="3.5" ry="1.8" fill="#fff" stroke="#000" stroke-width="1.2"/><ellipse cx="4.5" cy="9.5" rx="3.5" ry="1.8" fill="#ee0" stroke="#000" stroke-width="1.2"/><ellipse cx="4.5" cy="12.5" rx="3.5" ry="1.8" fill="#ee0" stroke="#000" stroke-width="1.2"/></svg>
<svg style="left:832px;top:62px" width="18" height="18" viewBox="0 0 18 18"><rect x="1.5" y="1.5" width="8" height="13" fill="#e4e4e4" stroke="#b86a30"/><path d="M1.5 7H4.5V5.5L7.5 8.3L4.5 11V9.5H1.5Z" fill="#fff" stroke="#a0a0a0" stroke-width="0.8"/><path d="M9.5 1.5L15.5 3.5V17L9.5 15Z" fill="#cf8240" stroke="#8a4020" stroke-width="0.9"/><circle cx="12.3" cy="9.5" r="0.8" fill="#fff"/></svg>
</body></html>
